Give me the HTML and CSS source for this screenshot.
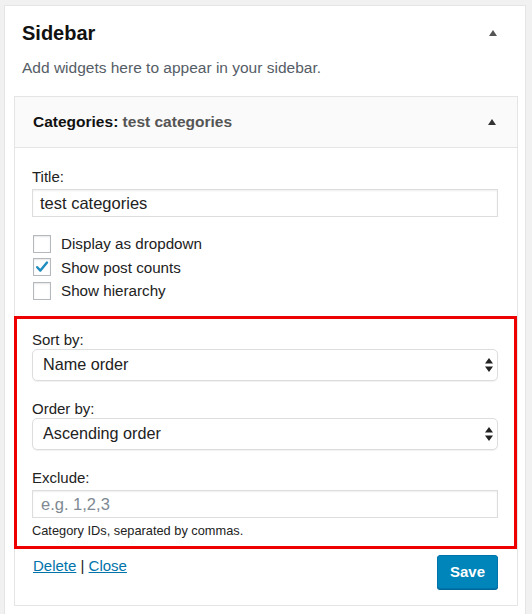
FILE: index.html
```html
<!DOCTYPE html>
<html>
<head>
<meta charset="utf-8">
<link rel="stylesheet" href="styles.css">
</head>
<body>
<div class="sidebar">
  <div class="sidebar-head">
    <h2 class="sidebar-title">Sidebar</h2>
    <span class="tri"></span>
  </div>
  <p class="sidebar-desc">Add widgets here to appear in your sidebar.</p>
  <div class="widget">
    <div class="widget-head">
      <h3 class="widget-title">Categories<span class="colon">:</span> <span class="instance">test categories</span></h3>
      <span class="tri"></span>
    </div>
    <div class="widget-body">
      <div class="field">
        <label class="lbl lbl-input">Title:</label>
        <div class="input">test categories</div>
      </div>
      <ul class="checks">
        <li class="check"><span class="box"></span>Display as dropdown</li>
        <li class="check"><span class="box"><svg viewBox="0 0 16 16" width="16" height="16"><path d="M3.2 8.2 L6.4 11.6 L13 3.6" fill="none" stroke="#1e8cbe" stroke-width="2.4" stroke-linecap="round" stroke-linejoin="round"/></svg></span>Show post counts</li>
        <li class="check"><span class="box"></span>Show hierarchy</li>
      </ul>
      <div class="highlight">
        <div class="field">
          <label class="lbl">Sort by:</label>
          <div class="select"><span>Name order</span><svg class="updown" viewBox="0 0 8 14" width="8" height="14"><path d="M4 0 L8 5.5 L0 5.5 Z M0 8.5 L8 8.5 L4 14 Z" fill="#222"/></svg></div>
        </div>
        <div class="field">
          <label class="lbl">Order by:</label>
          <div class="select"><span>Ascending order</span><svg class="updown" viewBox="0 0 8 14" width="8" height="14"><path d="M4 0 L8 5.5 L0 5.5 Z M0 8.5 L8 8.5 L4 14 Z" fill="#222"/></svg></div>
        </div>
        <div class="field last">
          <label class="lbl lbl-input">Exclude:</label>
          <div class="input placeholder">e.g. 1,2,3</div>
          <small class="help">Category IDs, separated by commas.</small>
        </div>
      </div>
      <div class="actions">
        <div class="links"><a class="link" href="#">Delete</a> | <a class="link" href="#">Close</a></div>
        <button class="save">Save</button>
      </div>
    </div>
  </div>
</div>
</body>
</html>
```
FILE: styles.css
```css
html, body {
  margin: 0;
  padding: 0;
  background: #f1f1f1;
  font-family: "Liberation Sans", Arial, Helvetica, sans-serif;
  color: #32373c;
}
.sidebar {
  margin: 5px 6px 0 4px;
  background: #fff;
  border: 1px solid #e5e5e5;
  border-bottom: none;
  padding: 0 7px 20px 9px;
  height: 620px;
  box-sizing: border-box;
}
.sidebar-head {
  display: flex;
  justify-content: space-between;
  align-items: center;
  padding: 15px 21px 0 8px;
  height: 24px;
}
.sidebar-title {
  margin: 0;
  font-size: 20px;
  font-weight: bold;
  color: #111;
  line-height: 24px;
}
.tri {
  width: 0;
  height: 0;
  border-left: 4.5px solid transparent;
  border-right: 4.5px solid transparent;
  border-bottom: 6px solid #555;
}
.sidebar-desc {
  margin: 13px 0 0 8px;
  font-size: 15.5px;
  line-height: 20px;
  color: #555d66;
}
.widget {
  margin-top: 18px;
  border: 1px solid #e5e5e5;
  background: #fff;
}
.widget-head {
  display: flex;
  justify-content: space-between;
  align-items: center;
  height: 50px;
  padding: 0 21px 0 18px;
  background: #fafafa;
  border-bottom: 1px solid #e5e5e5;
}
.widget-title {
  margin: 0;
  font-size: 15.5px;
  font-weight: bold;
  color: #111;
}
.widget-title .instance {
  color: #555;
}
.widget-head .tri {
  border-bottom-color: #333;
}
.widget-body {
  padding: 21px 19px 16px 17px;
}
.field {
  display: flex;
  flex-direction: column;
}
.lbl {
  font-size: 15px;
  line-height: 16px;
  color: #222;
  margin-bottom: 1px;
}
.lbl-input {
  margin-bottom: 4px;
}
.input {
  height: 28px;
  box-sizing: border-box;
  border: 1px solid #ddd;
  box-shadow: inset 0 1px 2px rgba(0,0,0,0.07);
  font-size: 16.5px;
  line-height: 26px;
  padding: 0 7px;
  color: #222;
}
.placeholder {
  color: #7e8993;
  padding: 0 8px;
}
.checks {
  list-style: none;
  margin: 15px 0 0 0;
  padding: 0;
}
.check {
  display: flex;
  align-items: center;
  font-size: 15.2px;
  color: #222;
  height: 23.5px;
  padding-left: 1px;
}
.box {
  width: 16px;
  height: 16px;
  border: 1px solid #b4b9be;
  box-shadow: inset 0 1px 2px rgba(0,0,0,0.1);
  margin-right: 10px;
  display: flex;
}
.highlight {
  margin: 13px -19px 0 -18px;
  border: 3px solid #ee0000;
  padding: 13px 16px 7px 15px;
}
.highlight .field {
  margin-bottom: 20px;
}
.highlight .field.last {
  margin-bottom: 0;
}
.select {
  display: flex;
  justify-content: space-between;
  align-items: center;
  height: 32px;
  box-sizing: border-box;
  border: 1px solid #ddd;
  border-radius: 5px;
  box-shadow: 0 1px 1px rgba(0,0,0,0.06);
  font-size: 16.2px;
  color: #222;
  padding: 0 4px 0 10px;
}
.updown {
  display: block;
}
.help {
  font-size: 12.8px;
  line-height: 16px;
  margin-top: 5px;
  color: #222;
}
.actions {
  display: flex;
  justify-content: space-between;
  align-items: flex-start;
  margin-top: 6px;
  height: 34px;
}
.links {
  font-size: 15px;
  line-height: 18px;
  color: #222;
  margin-top: 2px;
  padding-left: 1px;
}
.link {
  color: #0073aa;
  text-decoration: underline;
}
.save {
  width: 61px;
  height: 34px;
  background: #0085ba;
  border: 1px solid #0073aa;
  border-radius: 3px;
  box-shadow: 0 1px 0 #006799;
  color: #fff;
  font-family: "Liberation Sans", Arial, sans-serif;
  font-weight: bold;
  font-size: 15px;
  padding: 0;
}
```
